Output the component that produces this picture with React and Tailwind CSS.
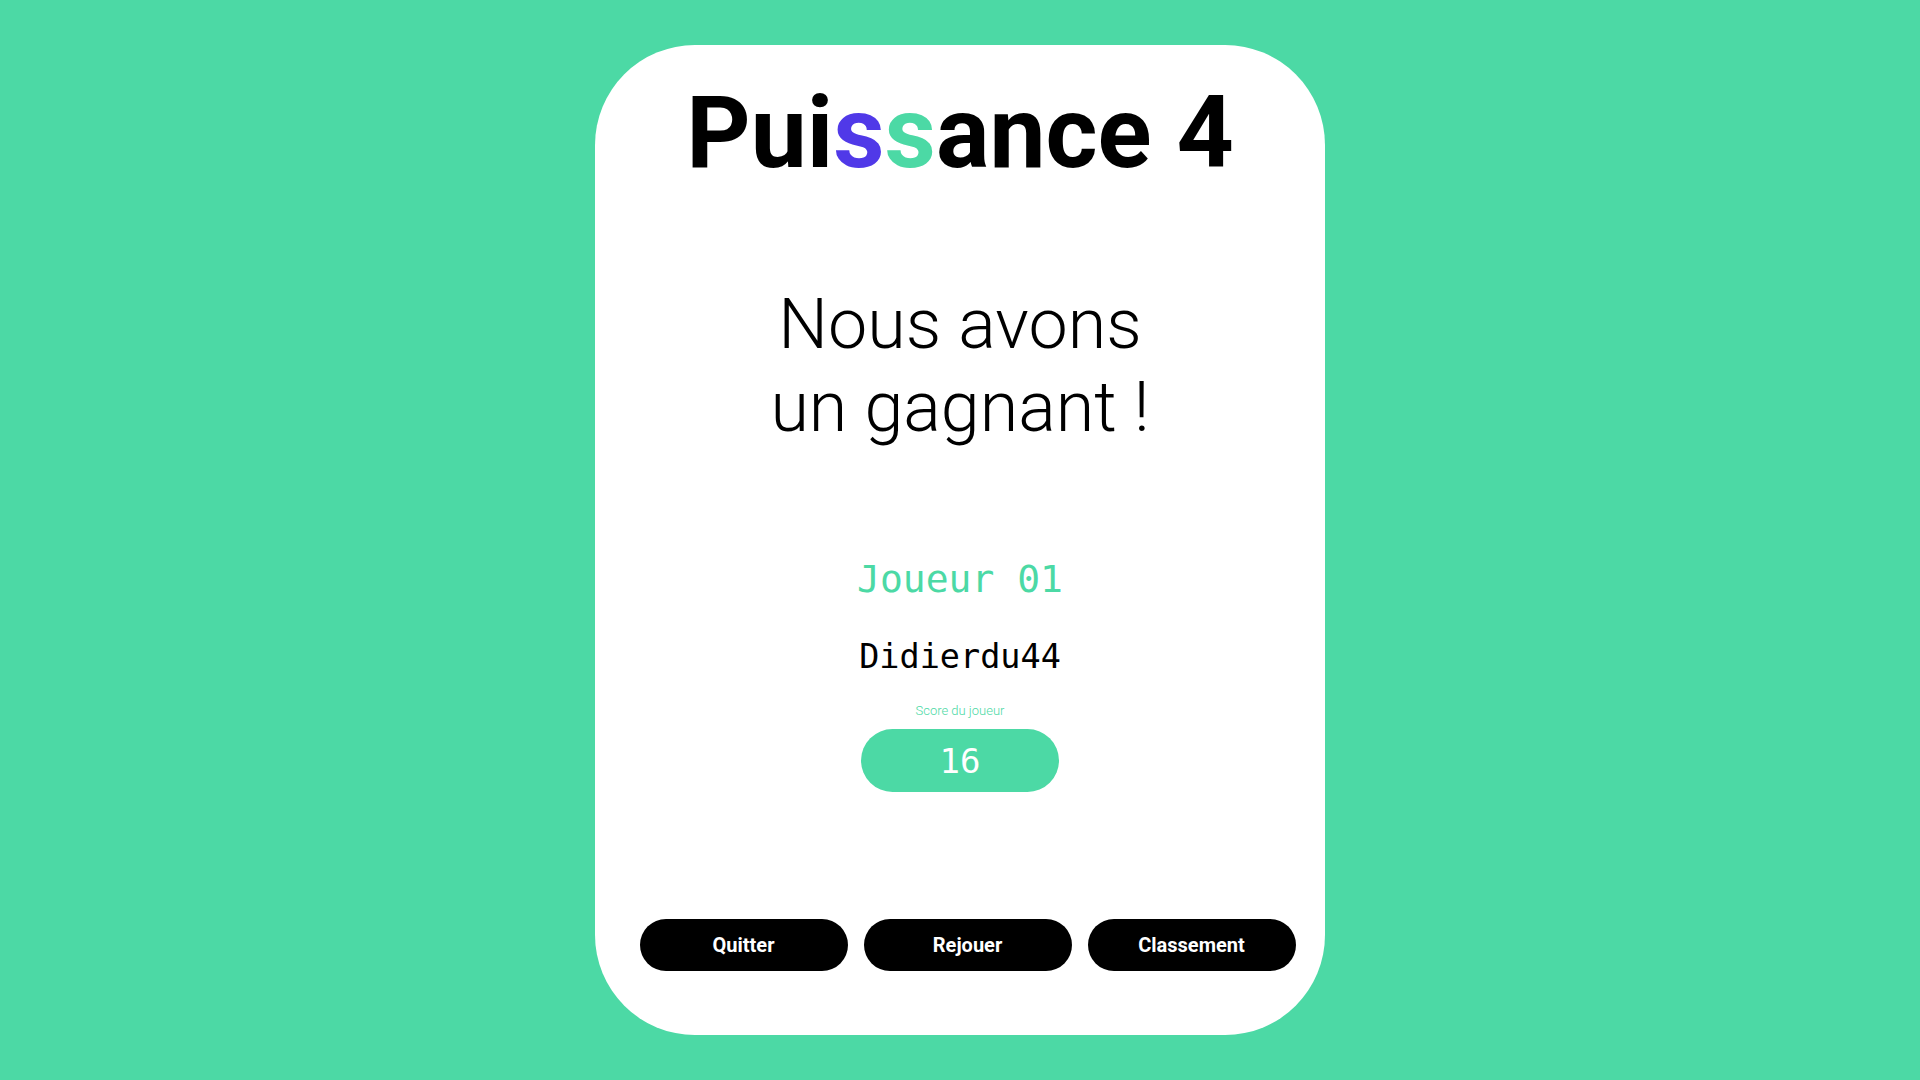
const ACTIONS = ['Quitter', 'Rejouer', 'Classement'];

function Title() {
  return (
    <h1 className="text-center text-[100px] font-bold leading-[100px] text-black">
      Pui<span className="text-[#5039e8]">s</span>
      <span className="text-[#4cd9a5]">s</span>ance 4
    </h1>
  );
}

function PlayerScore({ label, name, score }) {
  return (
    <div className="flex flex-col items-center">
      <p className="mt-[111px] font-['DejaVu_Sans_Mono',monospace] text-[38px] leading-[38px] text-[#4cd9a5]">
        {label}
      </p>
      <p className="mt-[42px] font-['DejaVu_Sans_Mono',monospace] text-[33.5px] leading-[34px] text-black">
        {name}
      </p>
      <p className="mt-[30px] text-[13px] font-light leading-[13px] text-[#4cd9a5]">
        Score du joueur
      </p>
      <div className="mt-[12px] flex h-[63px] w-[198px] items-center justify-center rounded-full bg-[#4cd9a5]">
        <span className="font-['DejaVu_Sans_Mono',monospace] text-[34px] leading-none text-white">
          {score}
        </span>
      </div>
    </div>
  );
}

export default function App() {
  return (
    <div className="flex min-h-screen justify-center bg-[#4cd9a5] pt-[45px] font-['Roboto',sans-serif]">
      <div className="flex h-[990px] w-[730px] flex-col items-center rounded-[100px] bg-white pt-[38px]">
        <Title />

        <h2 className="mt-[100px] text-center text-[70px] font-light leading-[83px] text-black">
          Nous avons
          <br />
          un gagnant !
        </h2>

        <PlayerScore label="Joueur 01" name="Didierdu44" score="16" />

        <div className="mt-[127px] flex gap-[16px] pl-[15px]">
          {ACTIONS.map((action) => (
            <button
              key={action}
              type="button"
              className="flex h-[52px] w-[208px] items-center justify-center rounded-full bg-black text-[20px] font-bold text-white"
            >
              {action}
            </button>
          ))}
        </div>
      </div>
    </div>
  );
}
